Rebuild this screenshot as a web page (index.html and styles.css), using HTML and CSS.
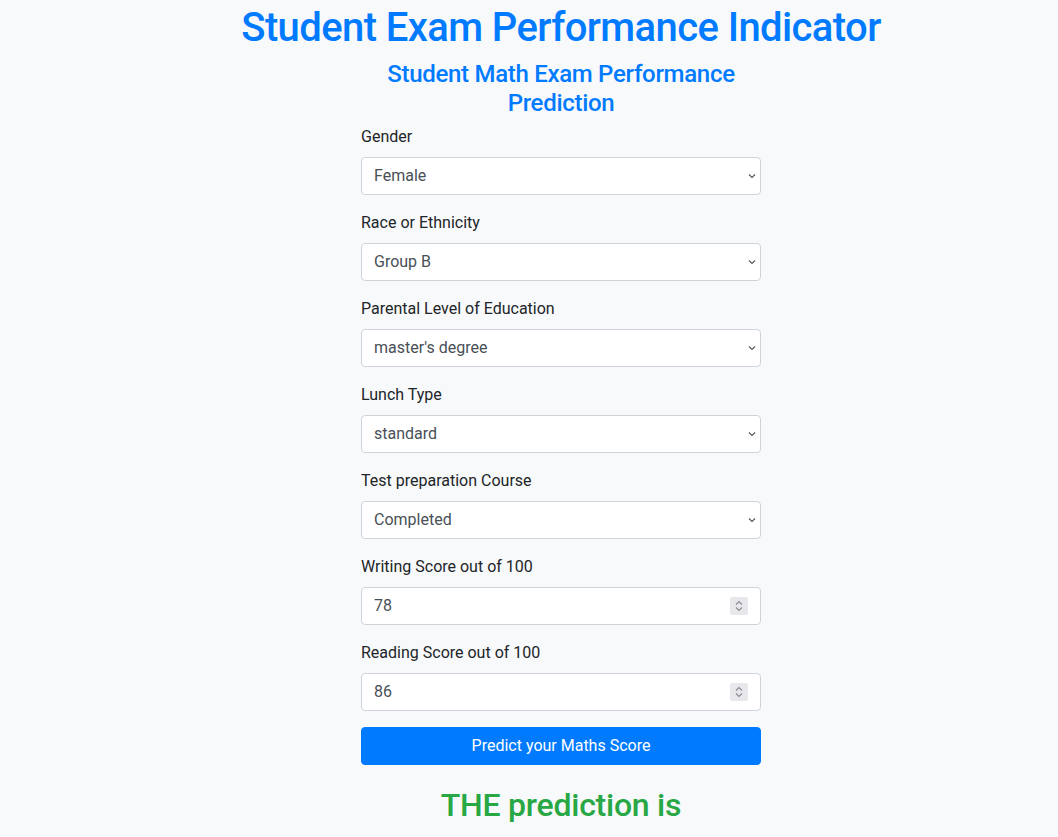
FILE: index.html
```html
<!DOCTYPE html>
<html lang="en">
<head>
<meta charset="utf-8">
<title>Student Exam Performance Indicator</title>
<link rel="stylesheet" href="styles.css">
</head>
<body>
<h1 class="title">Student Exam Performance Indicator</h1>
<div class="login">
  <h2 class="subtitle">Student Math Exam Performance Prediction</h2>
  <form class="form">
    <div class="group">
      <label class="label">Gender</label>
      <div class="select-wrap">
        <select class="control"><option>Female</option></select>
        <svg class="chev" width="8" height="6" viewBox="0 0 8 6"><path d="M1 1.5 L4 4.5 L7 1.5" fill="none" stroke="#555" stroke-width="1.1"/></svg>
      </div>
    </div>
    <div class="group">
      <label class="label">Race or Ethnicity</label>
      <div class="select-wrap">
        <select class="control"><option>Group B</option></select>
        <svg class="chev" width="8" height="6" viewBox="0 0 8 6"><path d="M1 1.5 L4 4.5 L7 1.5" fill="none" stroke="#555" stroke-width="1.1"/></svg>
      </div>
    </div>
    <div class="group">
      <label class="label">Parental Level of Education</label>
      <div class="select-wrap">
        <select class="control"><option>master's degree</option></select>
        <svg class="chev" width="8" height="6" viewBox="0 0 8 6"><path d="M1 1.5 L4 4.5 L7 1.5" fill="none" stroke="#555" stroke-width="1.1"/></svg>
      </div>
    </div>
    <div class="group">
      <label class="label">Lunch Type</label>
      <div class="select-wrap">
        <select class="control"><option>standard</option></select>
        <svg class="chev" width="8" height="6" viewBox="0 0 8 6"><path d="M1 1.5 L4 4.5 L7 1.5" fill="none" stroke="#555" stroke-width="1.1"/></svg>
      </div>
    </div>
    <div class="group">
      <label class="label">Test preparation Course</label>
      <div class="select-wrap">
        <select class="control"><option>Completed</option></select>
        <svg class="chev" width="8" height="6" viewBox="0 0 8 6"><path d="M1 1.5 L4 4.5 L7 1.5" fill="none" stroke="#555" stroke-width="1.1"/></svg>
      </div>
    </div>
    <div class="group">
      <label class="label">Writing Score out of 100</label>
      <div class="select-wrap">
        <input class="control num" type="text" value="78">
        <span class="spin"><svg width="10" height="14" viewBox="0 0 10 14"><path d="M2 5.5 L5 2.5 L8 5.5 M2 8.5 L5 11.5 L8 8.5" fill="none" stroke="#8a8a8e" stroke-width="1.1"/></svg></span>
      </div>
    </div>
    <div class="group">
      <label class="label">Reading Score out of 100</label>
      <div class="select-wrap">
        <input class="control num" type="text" value="86">
        <span class="spin"><svg width="10" height="14" viewBox="0 0 10 14"><path d="M2 5.5 L5 2.5 L8 5.5 M2 8.5 L5 11.5 L8 8.5" fill="none" stroke="#8a8a8e" stroke-width="1.1"/></svg></span>
      </div>
    </div>
    <div class="group">
      <button class="btn" type="button">Predict your Maths Score</button>
    </div>
  </form>
  <h2 class="result">THE prediction is</h2>
</div>
</body>
</html>
```
FILE: styles.css
```css
html, body {
  margin: 0;
  padding: 0;
}
body {
  background: #f8f9fa;
  font-family: "Roboto", "Liberation Sans", sans-serif;
  font-size: 16px;
  line-height: 1.5;
  color: #212529;
  padding-left: 64px;
}
.title {
  margin: 4px 0 8px;
  text-align: center;
  color: #007bff;
  font-size: 40px;
  font-weight: 500;
  line-height: 1.2;
  letter-spacing: -0.6px;
}
.login {
  width: 400px;
  margin: 0 auto;
}
.subtitle {
  margin: 0 0 7px;
  text-align: center;
  color: #007bff;
  font-size: 24px;
  font-weight: 500;
  line-height: 1.2;
  letter-spacing: -0.3px;
}
.form {
  display: flex;
  flex-direction: column;
}
.group {
  margin-bottom: 16px;
  display: flex;
  flex-direction: column;
}
.label {
  margin-bottom: 8px;
  font-size: 16px;
  line-height: 24px;
}
.select-wrap {
  position: relative;
}
.control {
  display: block;
  box-sizing: border-box;
  width: 100%;
  height: 38px;
  padding: 6px 12px;
  font-family: inherit;
  font-size: 16px;
  line-height: 24px;
  color: #495057;
  background: #fff;
  border: 1px solid #ced4da;
  border-radius: 4px;
  appearance: none;
  -webkit-appearance: none;
  outline: none;
}
.chev {
  position: absolute;
  right: 5px;
  top: 16px;
}
.spin {
  position: absolute;
  right: 13px;
  top: 10px;
  width: 18px;
  height: 18px;
  background: #e8e8ec;
  border-radius: 2px;
  display: flex;
  align-items: center;
  justify-content: center;
}
.btn {
  width: 100%;
  height: 38px;
  box-sizing: border-box;
  border: 1px solid #007bff;
  background: #007bff;
  color: #fff;
  font-family: inherit;
  font-size: 16px;
  border-radius: 4px;
}
.result {
  margin: 5px 0 0;
  text-align: center;
  color: #28a745;
  font-size: 32px;
  font-weight: 500;
  line-height: 1.2;
  letter-spacing: -0.25px;
}
```
